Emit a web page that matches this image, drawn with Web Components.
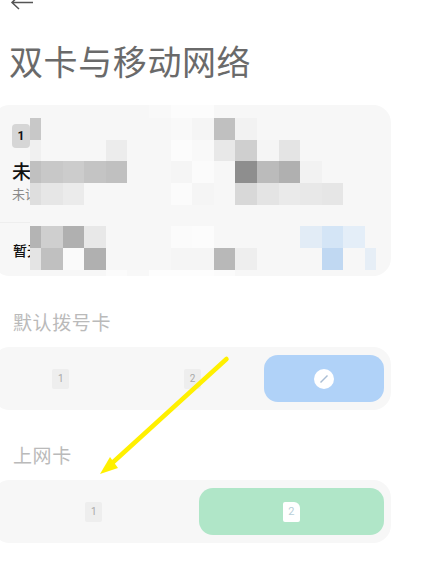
<!DOCTYPE html>
<html lang="zh">
<head>
<meta charset="utf-8">
<title>双卡与移动网络</title>
<style>
    html, body { margin: 0; background: #fff; }
    body {
        width: 433px;
        height: 574px;
        overflow: hidden;
        position: relative;
        font-family: "Noto Sans CJK SC", "Noto Sans", sans-serif;
    }
</style>
</head>
<body>
<settings-page>
    <back-bar></back-bar>
    <page-title>双卡与移动网络</page-title>
    <sim-panel></sim-panel>
    <section-label>默认拨号卡</section-label>
    <sim-switch icon="dial"></sim-switch>
    <section-label>上网卡</section-label>
    <sim-switch icon="data"></sim-switch>
</settings-page>
<arrow-mark></arrow-mark>

<script>
customElements.define('settings-page', class extends HTMLElement {
    constructor() {
        super();
        this.attachShadow({ mode: 'open' });
    }

    connectedCallback() {
        this.shadowRoot.innerHTML = `
        <style>
            :host {
                display: flex;
                flex-direction: column;
                width: 399px;
                margin-left: -8px;
            }
        </style>
        <slot></slot>
        `;
    }
});

customElements.define('back-bar', class extends HTMLElement {
    constructor() {
        super();
        this.attachShadow({ mode: 'open' });
    }

    connectedCallback() {
        this.shadowRoot.innerHTML = `
        <style>
            :host {
                display: block;
                height: 10px;
                padding-left: 18px;
                overflow: hidden;
            }
            svg { display: block; margin-top: -8px; }
        </style>
        <svg width="24" height="18" viewBox="0 0 24 18" fill="none" stroke="#555" stroke-width="1.5">
            <path d="M2 10.5H23M9 3.5L2 10.5L9 17"/>
        </svg>
        `;
    }
});

customElements.define('page-title', class extends HTMLElement {
    constructor() {
        super();
        this.attachShadow({ mode: 'open' });
    }

    connectedCallback() {
        this.shadowRoot.innerHTML = `
        <style>
            :host {
                display: block;
                padding: 30px 0 0 17px;
                height: 65px;
                font-size: 34px;
                line-height: 42px;
                color: #6a6a6a;
                letter-spacing: 0.6px;
                white-space: nowrap;
            }
        </style>
        <slot></slot>
        `;
    }
});

// first and last rows are the thin strips above and below the pixelated block
const MOSAIC_ROWS = [
    { 6: 'f9f9f9', 7: 'fcfcfc', 8: 'fcfcfc' },
    { 0: 'c8c8c8', 7: 'f9f9f9', 8: 'f5f5f5', 9: 'c0c0c0', 10: 'f2f2f2' },
    { 0: 'f0f0f0', 4: 'ececec', 7: 'fcfcfc', 8: 'f9f9f9', 9: 'e8e8e8', 10: 'cfcfcf', 11: 'f5f5f5', 12: 'e4e4e4' },
    { 0: 'c0c0c0', 1: 'c8c8c8', 2: 'cccccc', 3: 'c4c4c4', 4: 'c0c0c0', 7: 'f5f5f5', 8: 'fbfbfb', 10: '8e8e8e', 11: 'bbbbbb', 12: 'b0b0b0', 13: 'f2f2f2' },
    { 0: 'dedede', 1: 'e6e6e6', 2: 'ebebeb', 7: 'fbfbfb', 8: 'f5f5f5', 10: 'd8d8d8', 11: 'e4e4e4', 12: 'eaeaea', 13: 'e8e8e8', 14: 'e6e6e6' },
    {},
    { 0: 'b4b4b4', 1: 'cfcfcf', 2: 'b0b0b0', 3: 'e8e8e8', 7: 'fbfbfb', 8: 'fcfcfc', 13: 'e2ecf6', 14: 'd4e5f6', 15: 'e4eef8' },
    { 0: 'e4e4e4', 1: 'c0c0c0', 2: 'fafafa', 3: 'b0b0b0', 7: 'f5f5f5', 8: 'f5f5f5', 9: 'b8b8b8', 10: 'eeeeee', 14: 'c0d8f2', 16: 'e6eef6' },
    { 4: 'fbfbfb', 5: 'f8f8f8', 6: 'fdfdfd', 7: 'fdfdfd', 8: 'fdfdfd', 9: 'fbfbfb' },
];

customElements.define('sim-panel', class extends HTMLElement {
    constructor() {
        super();
        this.attachShadow({ mode: 'open' });
    }

    connectedCallback() {
        let cells = '';
        MOSAIC_ROWS.forEach(function(row) {
            for (let col = 0; col < 17; col++) {
                cells += `<i style="background:#${row[col] || 'f7f7f7'}"></i>`;
            }
        });
        this.shadowRoot.innerHTML = `
        <style>
            :host {
                display: grid;
                grid-template-columns: 198px 194px;
                justify-content: space-between;
                position: relative;
                height: 171px;
                margin-bottom: 1px;
            }
            .card {
                background: #f7f7f7;
                border-radius: 18px;
                display: flex;
                flex-direction: column;
                color: #111;
            }
            .top { flex: 1; padding: 19px 0 0 20px; }
            .bottom {
                height: 54px;
                box-sizing: border-box;
                padding: 17px 0 0 21px;
                border-top: 1px solid #eeeeee;
                font-size: 14px;
                line-height: 20px;
                font-weight: 500;
            }
            .num {
                width: 18px;
                height: 24px;
                border-radius: 4px;
                background: #d6d6d6;
                font: 700 12px/24px "Roboto", sans-serif;
                text-align: center;
            }
            .name { margin-top: 11px; font-size: 19px; line-height: 24px; font-weight: 500; }
            .sub { margin-top: 2px; font-size: 13px; line-height: 18px; color: #8a8a8a; }
            .mosaic {
                position: absolute;
                left: 38px;
                top: 0;
                width: 346px;
                height: 171px;
                display: grid;
                grid-template-columns: 11px repeat(15, 21.6px) 11px;
                grid-template-rows: 13px repeat(7, 21.7px) 6px;
                overflow: hidden;
                filter: blur(0.5px);
            }
        </style>
        <div class="card">
            <div class="top">
                <div class="num">1</div>
                <div class="name">未</div>
                <div class="sub">未识</div>
            </div>
            <div class="bottom">暂无</div>
        </div>
        <div class="card"></div>
        <div class="mosaic">${cells}</div>
        `;
    }
});

customElements.define('section-label', class extends HTMLElement {
    constructor() {
        super();
        this.attachShadow({ mode: 'open' });
    }

    connectedCallback() {
        this.shadowRoot.innerHTML = `
        <style>
            :host {
                display: block;
                padding: 31px 0 12px 21px;
                height: 27px;
                font-size: 19px;
                line-height: 27px;
                color: #bababa;
                letter-spacing: 0.6px;
            }
        </style>
        <slot></slot>
        `;
    }
});

customElements.define('sim-switch', class extends HTMLElement {
    constructor() {
        super();
        this.attachShadow({ mode: 'open' });
    }

    connectedCallback() {
        const dial = this.getAttribute('icon') === 'dial';
        const slots = dial
            ? `<div class="opt"><span class="badge">1</span></div>
               <div class="opt"><span class="badge">2</span></div>
               <div class="opt on blue">
                   <svg width="20" height="20" viewBox="0 0 20 20">
                       <circle cx="10" cy="10" r="10" fill="#fff"/>
                       <path d="M6.5 13.5L13.5 6.5" stroke="#a9bdd4" stroke-width="1.5"/>
                   </svg>
               </div>`
            : `<div class="opt"><span class="badge">1</span></div>
               <div class="opt on green"><span class="sim">2</span></div>`;
        this.shadowRoot.innerHTML = `
        <style>
            :host {
                display: grid;
                grid-auto-flow: column;
                grid-auto-columns: 1fr;
                height: 63px;
                box-sizing: border-box;
                padding: 8px 1px 8px 3px;
                background: #f7f7f7;
                border-radius: 18px;
            }
            .opt {
                display: flex;
                align-items: center;
                justify-content: center;
                margin: 0 6px;
                border-radius: 14px;
            }
            .blue { background: #b0d2f8; }
            .green { background: #b0e6c8; }
            .badge, .sim {
                box-sizing: border-box;
                width: 17px;
                height: 20px;
                font: 10px/20px "Roboto", sans-serif;
                text-align: center;
            }
            .badge { background: #eeeeee; border-radius: 2px; color: #a8a8a8; }
            .sim {
                background: #fff;
                color: #b8cfd8;
                font-size: 11px;
                border-radius: 2px 6px 2px 2px;
            }
        </style>
        ${slots}
        `;
    }
});

customElements.define('arrow-mark', class extends HTMLElement {
    constructor() {
        super();
        this.attachShadow({ mode: 'open' });
    }

    connectedCallback() {
        this.shadowRoot.innerHTML = `
        <style>
            :host { position: absolute; left: 0; top: 0; width: 433px; height: 574px; pointer-events: none; }
            svg { display: block; }
        </style>
        <svg width="433" height="574" viewBox="0 0 433 574">
            <path d="M226.5 359L110 465" stroke="#fff000" stroke-width="4.5" stroke-linecap="round"/>
            <path d="M100 474L110 457L118 468Z" fill="#fff000"/>
        </svg>
        `;
    }
});
</script>
</body>
</html>
